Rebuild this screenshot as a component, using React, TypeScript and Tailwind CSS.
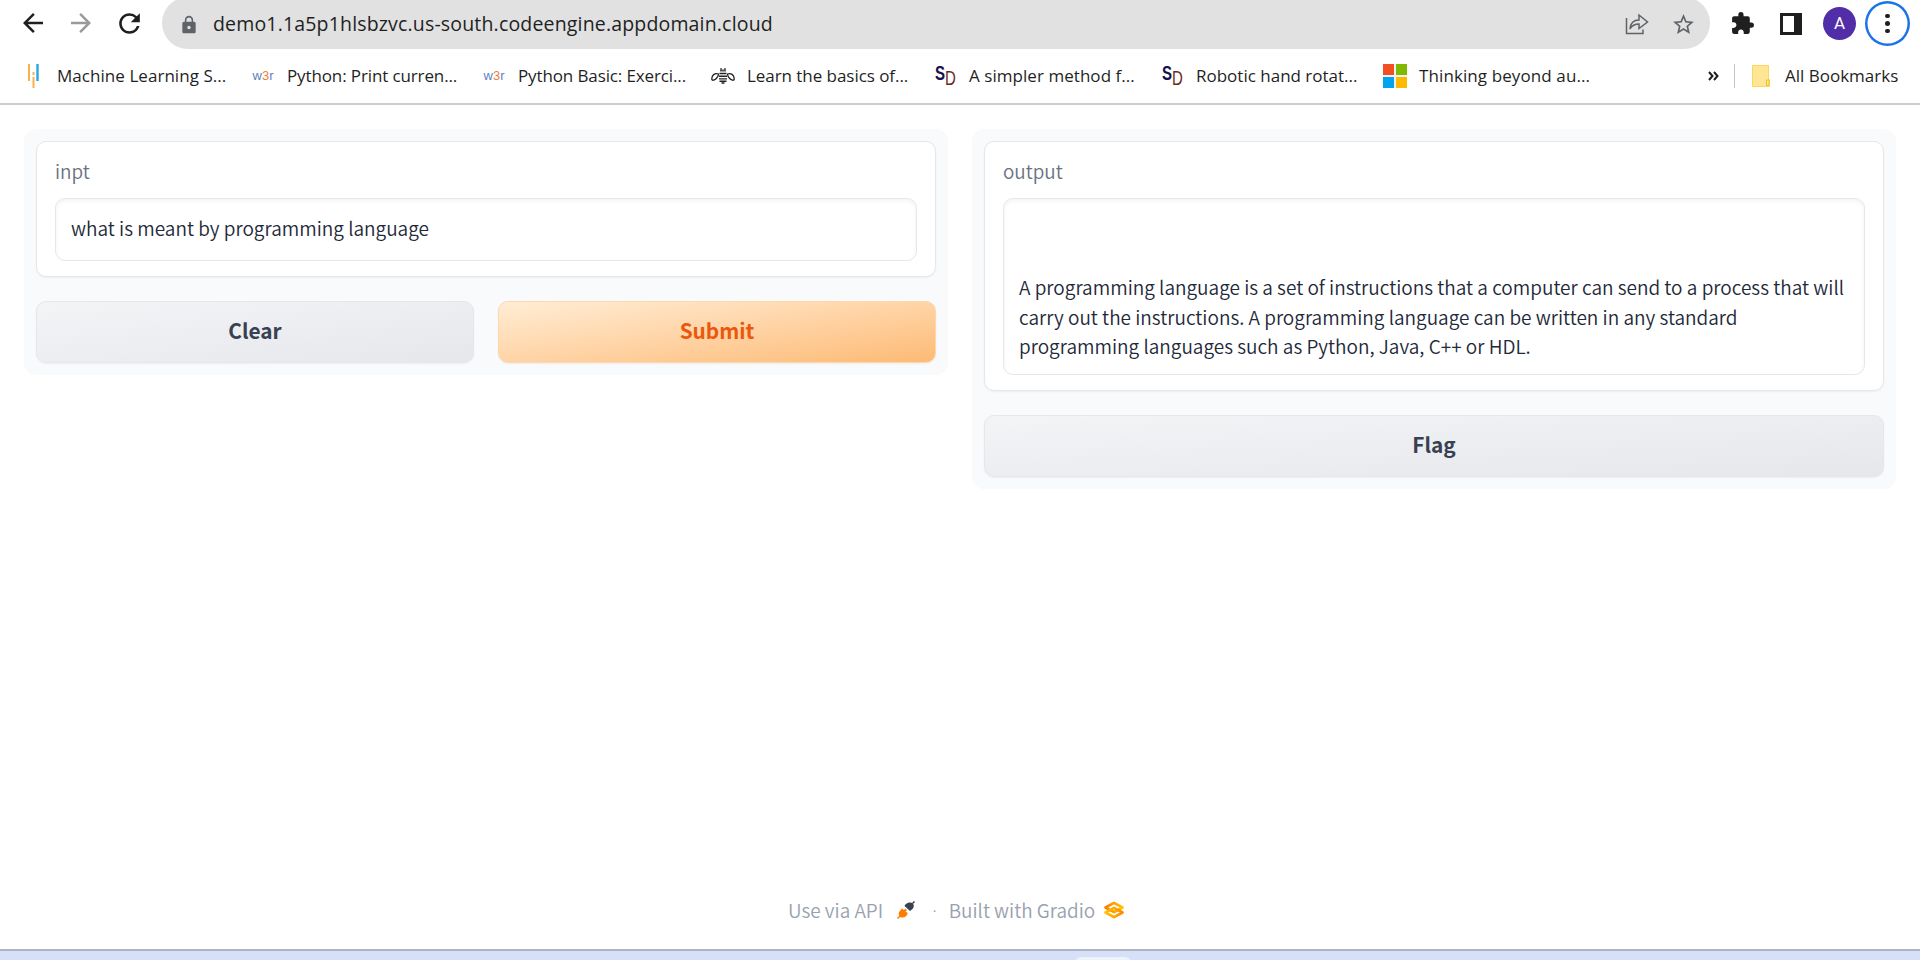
import type { ReactNode } from "react";
import { MdArrowBack, MdArrowForward, MdExtension, MdLock, MdRefresh, MdStarBorder } from "react-icons/md";

function LearnIcon() {
  return (
    <svg viewBox="0 0 24 24" className="size-6">
      <path d="M8 0v17M12.5 13v11M12.5 8v3" stroke="#f9b150" strokeWidth="2" />
      <path d="M16.5 0v17" stroke="#2aa7dc" strokeWidth="2.4" />
    </svg>
  );
}

function W3rIcon() {
  return (
    <span className="font-['Liberation_Sans',sans-serif] text-[13px] leading-6 text-[#5a82bd]">
      w<span className="text-[#f47c3c]">3</span>r
    </span>
  );
}

function BeeIcon() {
  return (
    <svg viewBox="0 0 24 24" className="size-6" fill="none" stroke="#222" strokeWidth="1.3">
      <path d="M7.500 10C4 8.500 1 11 .8 14.500c-.2 3 3 1.500 4.500 0 1.200-1.200 2-2.500 2.200-4ZM16.500 10c3.500-1.500 6.500 1 6.700 4.500.2 3-3 1.500-4.500 0-1.200-1.200-2-2.500-2.200-4Z" />
      <path d="M8.500 9.500h7M8 12.200h8M8 14.900h8M8.500 17.300h7M10.500 19h3" strokeWidth="1.400" />
      <path d="M9 6.500h6M9.300 5h1.500M13.200 5h1.500" strokeWidth="2" stroke="#555" />
    </svg>
  );
}

function SdIcon() {
  return (
    <span className="flex w-5 font-['Liberation_Sans',sans-serif] text-[20px] leading-6">
      <b className="-mt-[2px] w-[10px] origin-left scale-x-75 text-[#15124f]">S</b>
      <span className="mt-[3px] w-[10px] origin-left scale-x-75 text-[#6b2a1c]">D</span>
    </span>
  );
}

function WindowsIcon() {
  return (
    <span className="grid size-6 grid-cols-2 gap-[2px] bg-[#f1f1ee]">
      <i className="bg-[#f25022]" />
      <i className="bg-[#7fba00]" />
      <i className="bg-[#00a4ef]" />
      <i className="bg-[#ffb900]" />
    </span>
  );
}

function Bookmark({ width, icon, spacing, children }: { width: string; icon: ReactNode; spacing: string; children: ReactNode }) {
  return (
    <div className={`flex shrink-0 items-center ${width}`}>
      <span className="flex w-6 justify-center">{icon}</span>
      <span className={`ml-[12px] whitespace-nowrap ${spacing}`}>{children}</span>
    </div>
  );
}

function BrowserChrome() {
  return (
    <header className="h-[105px] shrink-0 border-b-2 border-[#cbcbcb] bg-white font-['Open_Sans',sans-serif] text-[#1f1f1f]">
      <div className="flex h-[47px] items-center pl-[18px]">
        <MdArrowBack className="-mt-px size-[30px]" />
        <MdArrowForward className="-mt-px ml-[18px] size-[30px] text-[#9a9a9a]" />
        <MdRefresh className="-mt-px ml-[18px] size-[31px]" />
        <div className="-mt-[1px] ml-[17px] flex h-[52px] w-[1548px] shrink-0 items-center rounded-full bg-[#e1e1e1] pr-[14px] pl-[17px]">
          <MdLock className="mt-[3px] size-5 text-[#5f6368]" />
          <span className="mt-[2px] ml-[14px] text-[19.500px] tracking-[0.170px] whitespace-nowrap">demo1.1a5p1hlsbzvc.us-south.codeengine.appdomain.cloud</span>
          <svg viewBox="0 0 24 22" className="mt-[2px] mr-[22px] ml-auto h-[22px] w-6 text-[#5f6368]" fill="none" stroke="currentColor" strokeWidth="1.500">
            <path d="M1.500 5v15.500h16.500v-4" />
            <path d="M5 16c.5-6 3.500-9 9-9V2l8.500 7-8.500 6.500V11c-4 0-7 1.500-9 5Z" />
          </svg>
          <MdStarBorder className="mt-[2px] size-[25px] text-[#5f6368]" />
        </div>
        <MdExtension className="ml-[20px] size-[25px]" />
        <svg viewBox="0 0 22 22" className="mt-px ml-[25px] size-[22px]">
          <path d="M0 0h22v22H0ZM3 3v16h11V3Z" fill="currentColor" fillRule="evenodd" />
        </svg>
        <span className="ml-[21px] flex size-[33px] items-center justify-center rounded-full bg-[#512da8] pt-px font-[Roboto,sans-serif] text-[17px] text-white">A</span>
        <span className="ml-[9px] flex size-[45px] flex-col items-center justify-center gap-[3px] rounded-full shadow-[inset_0_0_0_2.5px_#1a73e8]">
          <i className="size-[4.500px] rounded-full bg-[#1f1f1f]" />
          <i className="size-[4.500px] rounded-full bg-[#1f1f1f]" />
          <i className="size-[4.500px] rounded-full bg-[#1f1f1f]" />
        </span>
      </div>
      <div className="mt-[17px] flex h-6 items-center pl-[21px] text-[17px]">
        <Bookmark width="w-[230px]" spacing="tracking-[0.050px]" icon={<LearnIcon />}>Machine Learning S...</Bookmark>
        <Bookmark width="w-[231px]" spacing="tracking-[-0.120px]" icon={<W3rIcon />}>Python: Print curren...</Bookmark>
        <Bookmark width="w-[229px]" spacing="tracking-[-0.120px]" icon={<W3rIcon />}>Python Basic: Exerci...</Bookmark>
        <Bookmark width="w-[222px]" spacing="tracking-[-0.050px]" icon={<BeeIcon />}>Learn the basics of...</Bookmark>
        <Bookmark width="w-[227px]" spacing="tracking-[0.050px]" icon={<SdIcon />}>A simpler method f...</Bookmark>
        <Bookmark width="w-[223px]" spacing="" icon={<SdIcon />}>Robotic hand rotat...</Bookmark>
        <Bookmark width="w-[325px]" spacing="tracking-[0.100px]" icon={<WindowsIcon />}>Thinking beyond au...</Bookmark>
        <svg viewBox="0 0 11 10" className="h-[10px] w-[11px]" fill="none" stroke="currentColor" strokeWidth="2">
          <path d="m1 1 3.500 4L1 9M6 1l3.500 4L6 9" />
        </svg>
        <i className="ml-[15px] h-6 w-px bg-[#c4c4c4]" />
        <svg viewBox="0 0 18 22" className="ml-[17px] h-[22px] w-[18px]">
          <path d="M.5.5h16v14h1v7H.5Z" fill="#ffe694" stroke="#fbd75b" />
          <path d="M14.500 20.500v-5.500h2.500v5.500Z" fill="#ffe694" stroke="#efc02f" />
        </svg>
        <span className="ml-[15px] whitespace-nowrap">All Bookmarks</span>
      </div>
    </header>
  );
}

function Field({ label, height, children }: { label: string; height: string; children: ReactNode }) {
  return (
    <div className="rounded-[10px] border border-gray-200 bg-white px-[18px] pt-[14px] pb-[15px] shadow-[0_1px_2px_0_rgba(0,0,0,0.05)]">
      <div className="mb-[13px] h-[29px] text-[18.900px] leading-[29px] font-[350] text-gray-500">{label}</div>
      <div className={`rounded-[10px] border border-gray-200 bg-white px-[15px] text-[19px] leading-[29.500px] font-[350] text-gray-800 shadow-[inset_0_2px_4px_0_rgba(0,0,0,0.05)] ${height}`}>
        {children}
      </div>
    </div>
  );
}

function Button({ look, children }: { look: string; children: ReactNode }) {
  return (
    <button className={`flex h-[62px] flex-1 items-center justify-center rounded-[10px] border bg-linear-to-br pb-[2px] text-[20.800px] font-semibold shadow-[0_1px_2px_0_rgba(0,0,0,0.05)] ${look}`}>
      {children}
    </button>
  );
}

const grayLook = "border-[#e5e7eb] from-[#f3f4f6] to-[#e5e7eb] text-[#374151]";
const orangeLook = "border-[#fed7aa] from-[#ffedd5] to-[#fdba74] text-[#ea580c]";

function PlugIcon() {
  return (
    <svg viewBox="0 0 18 18" className="size-[18px]">
      <path d="M.5 17.500 4 14" stroke="#ff7c00" strokeWidth="1.500" />
      <path d="M5 7.500 7 9l1.500-1.500L10 9 8.500 10.500 10.500 12c.5 1.500-2 4.500-4.500 4.500-3 0-5-2-4-5.500Z" fill="#ff7c00" />
      <path d="M17.500.5 15.500 2.500" stroke="#374151" strokeWidth="1.500" />
      <path d="M7.500 5c1-2.500 4-4 6-3.500 3.500.5 4 3.500 2.500 6L13 10Z" fill="#374151" />
    </svg>
  );
}

function GradioIcon() {
  return (
    <svg viewBox="0 0 20 18" className="h-[18px] w-5" fill="none" strokeWidth="2.600" strokeLinejoin="round">
      <defs>
        <linearGradient id="upper" x1="0" x2="1">
          <stop offset="0" stopColor="#ff7c00" />
          <stop offset="1" stopColor="#ffc400" />
        </linearGradient>
        <linearGradient id="lower" x1="0" x2="1">
          <stop offset="0" stopColor="#ffc400" />
          <stop offset="1" stopColor="#ff8a00" />
        </linearGradient>
      </defs>
      <path d="M1.500 6.500 10 1.800l8.500 4.700L10 11.200Z" stroke="url(#upper)" />
      <path d="M1.500 11.500 10 6.800l8.500 4.700L10 16.200Z" stroke="url(#lower)" />
    </svg>
  );
}

export default function App() {
  return (
    <div className="flex h-[960px] w-[1920px] flex-col overflow-hidden bg-white font-['Noto_Sans_CJK_SC','Noto_Sans',sans-serif]">
      <BrowserChrome />
      <main className="flex flex-1 flex-col">
        <div className="grid grid-cols-2 items-start gap-6 px-6 pt-6">
          <section className="flex flex-col gap-6 rounded-[12px] bg-gray-50 p-3">
            <Field label="inpt" height="h-[63px] pt-[14px]">what is meant by programming language</Field>
            <div className="flex gap-6">
              <Button look={grayLook}>Clear</Button>
              <Button look={orangeLook}>Submit</Button>
            </div>
          </section>
          <section className="flex flex-col gap-6 rounded-[12px] bg-gray-50 p-3">
            <Field label="output" height="h-[177px] pt-[73px]">
              <p className="whitespace-nowrap">
                A programming language is a set of instructions that a computer can send to a process that will<br />
                carry out the instructions. A programming language can be written in any standard<br />
                programming languages such as Python, Java, C++ or HDL.
              </p>
            </Field>
            <div className="flex">
              <Button look={grayLook}>Flag</Button>
            </div>
          </section>
        </div>
        <footer className="mt-auto mb-[24px] flex h-[30px] items-center pl-[788px] text-[18.950px] font-[350] text-gray-400">
          <span>Use via API</span>
          <span className="ml-[14px]"><PlugIcon /></span>
          <span className="ml-[17px] font-['Noto_Sans',sans-serif]">·</span>
          <span className="ml-[12px]">Built with Gradio</span>
          <span className="ml-[9px]"><GradioIcon /></span>
        </footer>
      </main>
      <div className="flex h-[11px] shrink-0 justify-center border-t-2 border-[#afb4c4] bg-[#d6e0f7] pl-[286px]">
        <i className="mt-[6px] h-6 w-[56px] rounded-[6px] bg-[#eef2fb]" />
      </div>
    </div>
  );
}
